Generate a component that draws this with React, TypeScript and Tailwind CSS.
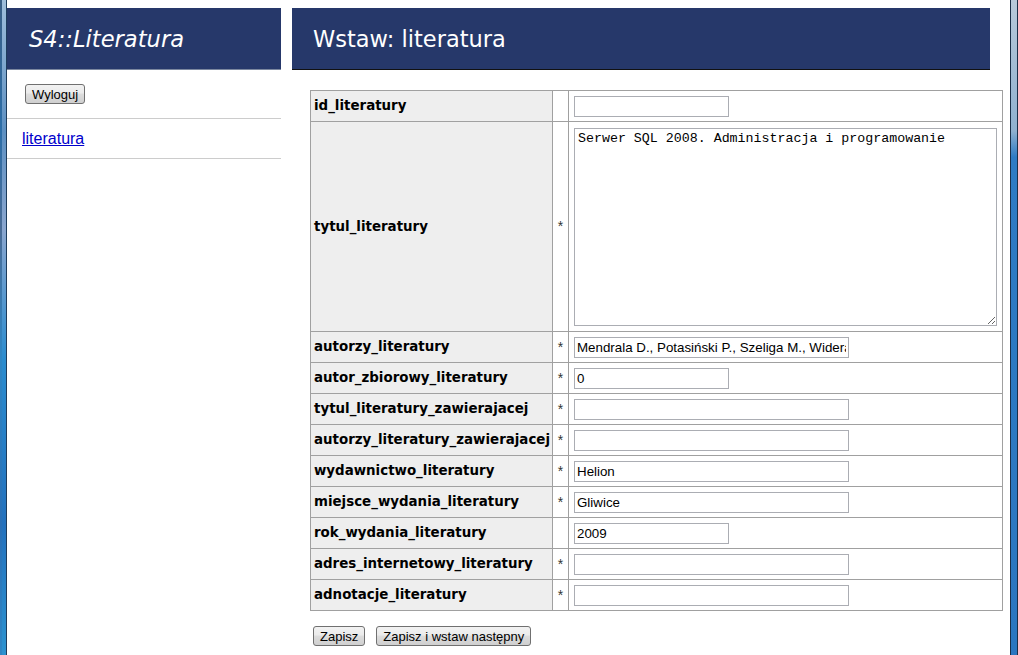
import React from 'react';

type Row = {
  name: string;
  required: boolean;
  kind: 'short' | 'wide' | 'area';
  value?: string;
};

const ROWS: Row[] = [
  { name: 'id_literatury', required: false, kind: 'short' },
  { name: 'tytul_literatury', required: true, kind: 'area', value: 'Serwer SQL 2008. Administracja i programowanie' },
  { name: 'autorzy_literatury', required: true, kind: 'wide', value: 'Mendrala D., Potasiński P., Szeliga M., Widera G.' },
  { name: 'autor_zbiorowy_literatury', required: true, kind: 'short', value: '0' },
  { name: 'tytul_literatury_zawierajacej', required: true, kind: 'wide' },
  { name: 'autorzy_literatury_zawierajacej', required: true, kind: 'wide' },
  { name: 'wydawnictwo_literatury', required: true, kind: 'wide', value: 'Helion' },
  { name: 'miejsce_wydania_literatury', required: true, kind: 'wide', value: 'Gliwice' },
  { name: 'rok_wydania_literatury', required: false, kind: 'short', value: '2009' },
  { name: 'adres_internetowy_literatury', required: true, kind: 'wide' },
  { name: 'adnotacje_literatury', required: true, kind: 'wide' },
];

const winBtn =
  "h-[20px] px-[6px] rounded-[3px] border border-[#707070] bg-[linear-gradient(#f2f2f2_0%,#ebebeb_45%,#dddddd_50%,#cfcfcf_100%)] text-[13px] leading-none text-black font-['Liberation_Sans',Arial,sans-serif]";

function Field({ row }: { row: Row }) {
  const base =
    "border border-[#abadb3] bg-white px-[2px] text-[13.33px] text-black font-['Liberation_Sans',Arial,sans-serif] outline-none";
  if (row.kind === 'area') {
    return (
      <textarea
        defaultValue={row.value}
        className="block w-[423px] h-[198px] border border-[#abadb3] bg-white px-[3px] py-[2px] text-[13.3px] leading-[16px] text-black font-['Liberation_Mono','Courier_New',monospace] outline-none"
      />
    );
  }
  return (
    <input
      defaultValue={row.value}
      className={`${base} block h-[21px] ${row.kind === 'short' ? 'w-[155px]' : 'w-[275px]'}`}
    />
  );
}

export default function App() {
  return (
    <div className="flex w-[1018px] h-[655px] overflow-hidden bg-white">
      {/* window frame, left */}
      <div className="w-[7px] shrink-0 flex">
        <div className="w-[2px] bg-[linear-gradient(#3a5f86,#2c6ea8_20%,#4a6c96_35%,#2f86c4_55%,#2a6fb5_80%,#2f86c4)]" />
        <div className="w-[4px] bg-[linear-gradient(#9fbedb,#5d90c2_20%,#8aa6cf_35%,#2a8ccf_55%,#2371bd_80%,#2c93d0)]" />
        <div className="w-[1px] bg-[#1d3c5c]" />
      </div>

      {/* page */}
      <div className="flex-1 flex pt-[8px] font-['DejaVu_Sans',Verdana,sans-serif]">
        {/* sidebar */}
        <div className="w-[274px] shrink-0">
          <div className="h-[62px] bg-[#26386a] border-b border-[#7b879f] flex items-center pl-[22px]">
            <span className="text-white italic text-[22.6px] leading-none pt-[2px]">S4::Literatura</span>
          </div>
          <div className="flex pl-[18px] pt-[14px] pb-[14px] border-b border-[#cccccc]">
            <button className={winBtn}>Wyloguj</button>
          </div>
          <div className="h-[40px] flex items-center pl-[15px] border-b border-[#cccccc]">
            <a href="#" className="text-[16px] text-[#0000cc] underline font-['Liberation_Sans',Arial,sans-serif]">
              literatura
            </a>
          </div>
        </div>

        {/* main */}
        <div className="ml-[11px] flex-1">
          <div className="w-[698px] h-[62px] bg-[#26386a] border-b border-[#111111] flex items-center pl-[21px]">
            <span className="text-white text-[22.5px] leading-none pt-[2px]">Wstaw: literatura</span>
          </div>

          <div className="pl-[18px] pt-[20px]">
            <table className="border-collapse w-[693px]">
              <tbody>
                {ROWS.map((row) => (
                  <tr key={row.name} className={row.kind === 'area' ? 'h-[210px]' : 'h-[31px]'}>
                    <td className="w-[242px] border border-[#a0a0a0] bg-[#eeeeee] pl-[3px] pt-[1px] text-[13.4px] font-bold text-black whitespace-nowrap">
                      {row.name}
                    </td>
                    <td className="w-[16px] border border-[#a0a0a0] text-center text-[14px] text-[#333333] font-['Liberation_Sans',Arial,sans-serif]">
                      {row.required ? '*' : ''}
                    </td>
                    <td className="border border-[#a0a0a0] pl-[5px]">
                      <Field row={row} />
                    </td>
                  </tr>
                ))}
              </tbody>
            </table>

            <div className="flex gap-[11px] pt-[15px] pl-[3px]">
              <button className={winBtn}>Zapisz</button>
              <button className={winBtn}>Zapisz i wstaw następny</button>
            </div>
          </div>
        </div>
      </div>

      {/* window frame, right */}
      <div className="w-[8px] shrink-0 flex">
        <div className="w-[1px] bg-[#1b2f48]" />
        <div className="flex-1 bg-[linear-gradient(#b7c9da,#8fb0cf_20%,#2e7bc4_24%,#2b76c0)]" />
        <div className="w-[1px] bg-[#1b2f48]" />
      </div>
    </div>
  );
}
